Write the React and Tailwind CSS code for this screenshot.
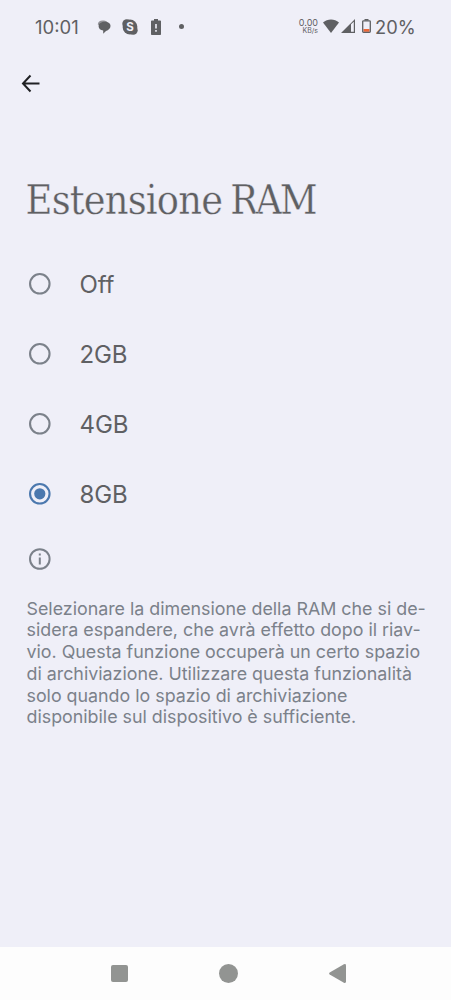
const OPTIONS = ['Off', '2GB', '4GB', '8GB']

const INFO_LINES = [
  'Selezionare la dimensione della RAM che si de-',
  'sidera espandere, che avrà effetto dopo il riav-',
  'vio. Questa funzione occuperà un certo spazio',
  'di archiviazione. Utilizzare questa funzionalità',
  'solo quando lo spazio di archiviazione',
  'disponibile sul dispositivo è sufficiente.',
]

function StatusBar() {
  return (
    <header className="flex h-[53px] items-center pl-[35px] pr-[37px] text-[#5f6063]">
      <span className="w-[62px] pt-px text-[18.5px] leading-none">10:01</span>
      <svg className="h-[14px] w-[14px]" viewBox="0 0 14 14" fill="currentColor">
        <path d="M.8 4.500C.8 2 3 .5 5.500.5c2 0 3.500.4 4.500 1.200L4 6Z" opacity=".65" />
        <path d="M8 1.800c3.300 0 5.500 1.700 5.500 4.300 0 2.400-2 4.300-4.500 4.800L6.200 13.700V10.600C3.500 10.200 1.600 8.500 1.600 6.200c0-2.600 2.800-4.400 6.400-4.400Z" />
      </svg>
      <svg className="ml-[11px] h-4 w-4" viewBox="0 0 16 16" fill="currentColor">
        <circle cx="8" cy="8" r="7.400" />
        <circle cx="4.800" cy="4.800" r="4.500" />
        <circle cx="11.200" cy="11.200" r="4.500" />
        <text x="8" y="12.200" textAnchor="middle" fontSize="11.500" fontWeight="700" fill="#efeff8">S</text>
      </svg>
      <svg className="ml-[13px] h-4 w-[10px]" viewBox="0 0 10 16" fill="currentColor">
        <path fillRule="evenodd" d="M3 0h4v1.500h2.200q.8 0 .8.800v12.900q0 .8-.8.800H.8Q0 16 0 15.200V2.300Q0 1.500.8 1.500H3ZM4.200 5v4.500h1.600V5ZM4.200 11v1.700h1.600V11Z" />
      </svg>
      <span className="ml-[18px] h-[5px] w-[5px] rounded-full bg-current" />
      <div className="ml-auto flex items-center">
        <div className="mr-[5px] flex flex-col items-end leading-none">
          <span className="text-[9px] leading-[9px]">0.00</span>
          <span className="text-[7px] leading-[8px]">KB/s</span>
        </div>
        <svg className="h-[14px] w-4" viewBox="0 0 16 14" fill="currentColor">
          <path d="M0 3.500C4.500-.5 11.500-.5 16 3.500L8 14Z" />
        </svg>
        <svg className="ml-[2px] h-[14px] w-[14px]" viewBox="0 0 14 14" fill="currentColor">
          <path fillRule="evenodd" d="M14 0v14H0ZM10 5.200v7.500h2.800V2.700Z" />
        </svg>
        <svg className="ml-[7px] h-[14px] w-[9px]" viewBox="0 0 9 14">
          <path d="M2.500 0h4v1.500h-4Z" fill="currentColor" />
          <rect x="1.500" y="10" width="6" height="2.800" fill="#ed6737" />
          <rect x=".7" y="1.800" width="7.600" height="11.500" rx=".8" fill="none" stroke="currentColor" strokeWidth="1.300" />
        </svg>
        <span className="ml-1 w-[39px] whitespace-nowrap pt-px text-[18.300px] leading-none">20%</span>
      </div>
    </header>
  )
}

function RadioOption({ label, selected }) {
  return (
    <label className="flex h-[69.9px] items-center gap-[29px] text-2xl tracking-[-0.1px] text-[#5f6063]">
      <svg className={selected ? 'h-[22px] w-[22px] text-[#4b78ae]' : 'h-[22px] w-[22px] text-[#7b818a]'} viewBox="0 0 22 22">
        <circle cx="10.800" cy="10.800" r="9.750" fill="none" stroke="currentColor" strokeWidth="2.100" />
        {selected && <circle cx="10.800" cy="10.800" r="5.600" fill="currentColor" />}
      </svg>
      <span className="pt-[3px]">{label}</span>
    </label>
  )
}

function NavBar() {
  return (
    <nav className="flex h-[53px] items-center bg-[#fdfdfd] pl-[110.500px] text-[#929492]">
      <span className="h-[17px] w-[17px] rounded-[2px] bg-current" />
      <span className="ml-[91px] h-[19px] w-[19px] rounded-full bg-current" />
      <svg className="ml-[91px] h-[19px] w-[17px]" viewBox="0 0 17 19" fill="currentColor">
        <path d="M.7 8.500 14.900.3Q17-.4 17 1.500v16Q17 19.400 14.900 18.700L.7 10.500Q-.5 9.500.7 8.500Z" />
      </svg>
    </nav>
  )
}

export default function App() {
  return (
    <div className="flex h-[1000px] w-full flex-col overflow-hidden bg-[#efeff8] font-['Inter',sans-serif]">
      <StatusBar />
      <button className="ml-[21px] mt-[21px] h-[19px] w-[19px] text-[#202124]">
        <svg className="h-[19px] w-[19px]" viewBox="0 0 19 19" fill="none" stroke="currentColor" strokeWidth="2">
          <path d="M9.500 1.500 2 9.500l7.500 8M2 9.500h16.500" />
        </svg>
      </button>
      <main className="flex-1 px-[26.500px] pt-[79px]">
        <h1 className="-ml-px flex gap-[8px] whitespace-nowrap font-['DejaVu_Serif_Condensed','DejaVu_Serif',serif] text-[41px] leading-[56px] text-[#5f6063] [-webkit-text-stroke:0.3px_#efeff8]">
          <span className="tracking-[-0.8px]">Estensione</span>
          <span className="tracking-[-2.500px]">RAM</span>
        </h1>
        <div className="mt-[21px] flex flex-col pl-[2px]">
          {OPTIONS.map((option) => (
            <RadioOption key={option} label={option} selected={option === '8GB'} />
          ))}
        </div>
        <svg className="ml-[2px] mt-[19.500px] h-[22px] w-[22px] text-[#7b818a]" viewBox="0 0 22 22" fill="currentColor">
          <circle cx="10.800" cy="11" r="9.800" fill="none" stroke="currentColor" strokeWidth="2" />
          <path d="M9.800 5.500h2v2h-2ZM9.800 9.500h2v7h-2Z" />
        </svg>
        <p className="mt-[27.500px] text-[17.840px] leading-[21.750px] text-[#7b818a]">
          {INFO_LINES.map((line) => (
            <span key={line} className="block whitespace-nowrap">{line}</span>
          ))}
        </p>
      </main>
      <NavBar />
    </div>
  )
}
